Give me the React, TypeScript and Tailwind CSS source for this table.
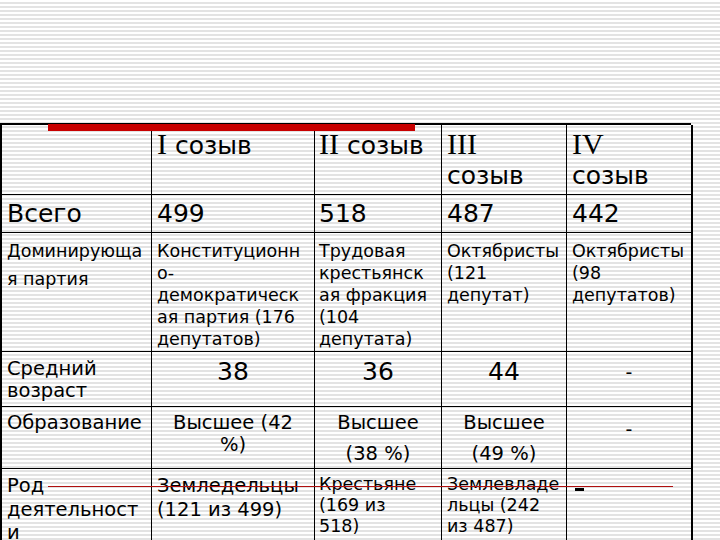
import React from "react";

const S = "font-['DejaVu_Sans',Verdana,sans-serif]";
const R = "font-['Liberation_Serif','Times_New_Roman',serif]";

function Cell({ children, className = "" }: { children?: React.ReactNode; className?: string }) {
  return <div className={`border-r border-b border-black text-black ${className}`}>{children}</div>;
}

export default function App() {
  return (
    <div className={`relative w-[720px] h-[540px] overflow-hidden bg-[repeating-linear-gradient(to_bottom,#ffffff_0px,#ffffff_2px,#e3e3e3_2px,#e3e3e3_4px)] ${S}`}>
      <div className="pt-[123px]">
        <div className="grid w-[691px] grid-cols-[150px_163px_127px_125px_126px] grid-rows-[70px_38px_119px_55px_62px_90px] border-t-2 border-l-2 border-black">
          {/* header */}
          <Cell />
          <Cell className="pl-[5px] pt-[3px] text-[25px] leading-[32px]">
            <span className={`${R} text-[30px]`}>I</span> созыв
          </Cell>
          <Cell className="pl-[4px] pt-[3px] text-[25px] leading-[32px]">
            <span className={`${R} text-[30px]`}>II</span> созыв
          </Cell>
          <Cell className="pl-[5px] pt-[3px] text-[25px] leading-[32px]">
            <div className={`${R} text-[30px]`}>III</div>
            <div>созыв</div>
          </Cell>
          <Cell className="pl-[5px] pt-[3px] text-[25px] leading-[32px] border-r-2">
            <div className={`${R} text-[30px]`}>IV</div>
            <div>созыв</div>
          </Cell>

          {/* Всего */}
          <Cell className="pl-[5px] pt-[3px] text-[25px] leading-[32px]">Всего</Cell>
          <Cell className="pl-[5px] pt-[3px] text-[25px] leading-[32px]">499</Cell>
          <Cell className="pl-[4px] pt-[3px] text-[25px] leading-[32px]">518</Cell>
          <Cell className="pl-[5px] pt-[3px] text-[25px] leading-[32px]">487</Cell>
          <Cell className="pl-[5px] pt-[3px] text-[25px] leading-[32px] border-r-2">442</Cell>

          {/* Доминирующая партия */}
          <Cell className="pl-[5px] pt-[4px] text-[17.5px] leading-[28px]">
            <div>Доминирующа</div>
            <div>я партия</div>
          </Cell>
          <Cell className="pl-[5px] pt-[7px] text-[17.5px] leading-[22px]">
            <div>Конституционн</div>
            <div>о-</div>
            <div>демократическ</div>
            <div>ая партия (176</div>
            <div>депутатов)</div>
          </Cell>
          <Cell className="pl-[4px] pt-[7px] text-[17.5px] leading-[22px]">
            <div>Трудовая</div>
            <div>крестьянск</div>
            <div>ая фракция</div>
            <div>(104</div>
            <div>депутата)</div>
          </Cell>
          <Cell className="pl-[5px] pt-[7px] text-[17.5px] leading-[22px]">
            <div>Октябристы</div>
            <div>(121</div>
            <div>депутат)</div>
          </Cell>
          <Cell className="pl-[5px] pt-[7px] text-[17.5px] leading-[22px] border-r-2">
            <div>Октябристы</div>
            <div>(98</div>
            <div>депутатов)</div>
          </Cell>

          {/* Средний возраст */}
          <Cell className="pl-[5px] pt-[6px] text-[19.5px] leading-[22px]">
            <div>Средний</div>
            <div>возраст</div>
          </Cell>
          <Cell className="pt-[4px] text-center text-[25px] leading-[32px]">38</Cell>
          <Cell className="pt-[4px] text-center text-[25px] leading-[32px]">36</Cell>
          <Cell className="pt-[4px] text-center text-[25px] leading-[32px]">44</Cell>
          <Cell className="pt-[4px] text-center text-[19px] leading-[32px] border-r-2">-</Cell>

          {/* Образование */}
          <Cell className="pl-[5px] pt-[5px] text-[19.5px] leading-[22px]">Образование</Cell>
          <Cell className="pt-[5px] text-center text-[19.5px] leading-[22px]">
            <div>Высшее (42</div>
            <div>%)</div>
          </Cell>
          <Cell className="pt-[0px] text-center text-[19.5px] leading-[31px]">
            <div>Высшее</div>
            <div>(38 %)</div>
          </Cell>
          <Cell className="pt-[0px] text-center text-[19.5px] leading-[31px]">
            <div>Высшее</div>
            <div>(49 %)</div>
          </Cell>
          <Cell className="pt-[6px] text-center text-[19px] leading-[32px] border-r-2">-</Cell>

          {/* Род деятельности */}
          <Cell className="pl-[5px] pt-[5px] text-[19.5px] leading-[23.5px]">
            <div>Род</div>
            <div>деятельност</div>
            <div>и</div>
          </Cell>
          <Cell className="pl-[5px] pt-[5px] text-[19.5px] leading-[23.5px]">
            <div>Земледельцы</div>
            <div>(121 из 499)</div>
          </Cell>
          <Cell className="pl-[4px] pt-[5px] text-[17.5px] leading-[21px]">
            <div>Крестьяне</div>
            <div>(169 из</div>
            <div>518)</div>
          </Cell>
          <Cell className="pl-[5px] pt-[5px] text-[17.5px] leading-[21px]">
            <div>Землевладе</div>
            <div>льцы (242</div>
            <div>из 487)</div>
          </Cell>
          <Cell className="pl-[8px] pt-[19px] border-r-2">
            <div className="h-[3px] w-[9px] bg-black" />
          </Cell>
        </div>
      </div>

      {/* red accents */}
      <div className="absolute left-[48px] top-[124px] h-[7px] w-[367px] bg-[#c80000]" />
      <div className="absolute left-[48px] top-[486px] h-px w-[625px] bg-[#b01010]" />
    </div>
  );
}
